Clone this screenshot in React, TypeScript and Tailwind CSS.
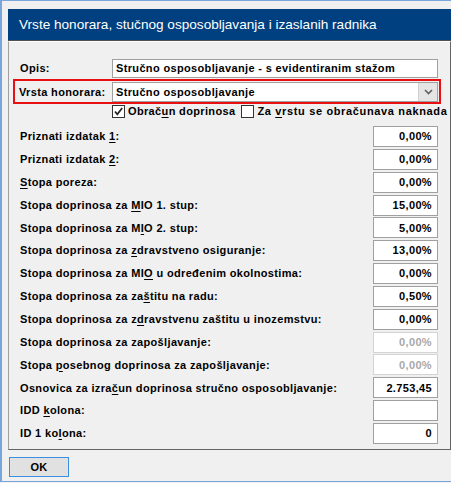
import React from "react";

const font = { fontFamily: '"Liberation Sans", Arial, sans-serif' };

type Row = { label: React.ReactNode; value: string; disabled?: boolean };

const U = ({ children }: { children: React.ReactNode }) => (
  <span className="underline decoration-1 underline-offset-[2px]">{children}</span>
);

const rows: Row[] = [
  { label: <>Priznati izdatak <U>1</U>:</>, value: "0,00%" },
  { label: <>Priznati izdatak <U>2</U>:</>, value: "0,00%" },
  { label: <><U>S</U>topa poreza:</>, value: "0,00%" },
  { label: <>Stopa doprinosa za <U>M</U>IO 1. stup:</>, value: "15,00%" },
  { label: <>Stopa doprinosa za M<U>I</U>O 2. stup:</>, value: "5,00%" },
  { label: <>Stopa doprinosa za <U>z</U>dravstveno osiguranje:</>, value: "13,00%" },
  { label: <>Stopa doprinosa za MI<U>O</U> u određenim okolnostima:</>, value: "0,00%" },
  { label: <>Stopa doprinosa za za<U>š</U>titu na radu:</>, value: "0,50%" },
  { label: <>Stopa doprinosa za z<U>d</U>ravstvenu zaštitu u inozemstvu:</>, value: "0,00%" },
  { label: <>Stopa doprinosa za zapošljavanje:</>, value: "0,00%", disabled: true },
  { label: <>Stopa <U>p</U>osebnog doprinosa za zapošljavanje:</>, value: "0,00%", disabled: true },
  { label: <>Osnovica za izra<U>č</U>un doprinosa stručno osposobljavanje:</>, value: "2.753,45" },
  { label: <>IDD <U>k</U>olona:</>, value: "" },
  { label: <>ID 1 ko<U>l</U>ona:</>, value: "0" },
];

export default function App() {
  return (
    <div className="w-[451px] h-[483px] bg-[#f0f0f0] overflow-hidden" style={font}>
      <div className="h-[482px] border-t border-l-2 border-b border-[#78a5dc] flex flex-col">
        {/* title bar */}
        <div className="ml-[6px] mt-[8px] h-[32px] w-[443px] bg-[#003f80] border-b border-[#505050] flex items-center pl-[11px]">
          <span className="text-white text-[13.6px] leading-none">
            Vrste honorara, stučnog osposobljavanja i izaslanih radnika
          </span>
        </div>
        {/* panel */}
        <div className="ml-[6px] w-[443px] border-t border-white border-l border-l-[#a0a0a0] border-r border-r-[#646464] border-b border-b-[#646464] pl-[11px] pr-[12px] pt-[17px] pb-[3px] text-[11px] font-bold tracking-[0.35px] text-black flex flex-col">
          {/* Opis */}
          <div className="flex items-center h-[19px]">
            <div className="w-[92px]">Opis:</div>
            <div className="flex-1 h-[19px] bg-white border border-[#a0a0a0] flex items-center pl-[3px]">
              <span>Stručno osposobljavanje - s evidentiranim stažom</span>
            </div>
          </div>
          {/* Vrsta honorara */}
          <div className="mt-[1px] -ml-[7px] -mr-[3px] h-[25px] border-2 border-[#e81010] pl-[4px] pr-[1px] pt-[1px]">
            <div className="flex items-center h-[20px]">
              <div className="w-[93px]">Vrsta honorara:</div>
              <div className="flex-1 h-[20px] bg-white border border-[#a0a0a0] flex items-center pl-[3px]">
                <span className="flex-1">Stručno osposobljavanje</span>
                <div className="w-[19px] h-[18px] bg-[#e5e5e5] border-l border-[#d0d0d0] flex items-center justify-center">
                  <svg width="9" height="6" viewBox="0 0 9 6">
                    <path d="M1 1 L4.5 4.5 L8 1" fill="none" stroke="#606060" strokeWidth="1.6" />
                  </svg>
                </div>
              </div>
            </div>
          </div>
          {/* checkboxes */}
          <div className="flex items-center h-[15px] pl-[92px] whitespace-nowrap">
            <div className="shrink-0 w-[13px] h-[13px] border border-[#333] bg-white flex items-center justify-center">
              <svg width="11" height="11" viewBox="0 0 11 11">
                <path d="M2 5.5 L4.3 8.3 L9.2 2" fill="none" stroke="#222" strokeWidth="1.7" />
              </svg>
            </div>
            <span className="shrink-0 ml-[3px]">Obrač<U>u</U>n doprinosa</span>
            <div className="shrink-0 ml-[6px] w-[13px] h-[13px] border border-[#333] bg-white" />
            <span className="shrink-0 ml-[3px] tracking-[0.65px]">Za <U>v</U>rstu se obračunava naknada</span>
          </div>
          {/* rows */}
          <div className="mt-[7px] grid auto-rows-[22.85px]">
            {rows.map((r, i) => (
              <div key={i} className="flex items-start whitespace-nowrap">
                <div className="flex-1 h-[21px] flex items-center">
                  <span>{r.label}</span>
                </div>
                <div
                  className={
                    r.disabled
                      ? "w-[65px] h-[21px] bg-white border border-[#d4d4d4] text-[#a8a8a8] flex items-center justify-end pr-[5px]"
                      : "w-[65px] h-[21px] bg-white border border-[#a0a0a0] flex items-center justify-end pr-[5px]"
                  }
                >
                  <span>{r.value}</span>
                </div>
              </div>
            ))}
          </div>
        </div>
        {/* bottom */}
        <div className="pl-[7px] pt-[7px]">
          <button className="w-[60px] h-[20px] bg-[#e1e1e1] border border-[#3c8ee0] text-[11px] font-bold tracking-[0.35px] flex items-center justify-center">
            OK
          </button>
        </div>
      </div>
    </div>
  );
}
